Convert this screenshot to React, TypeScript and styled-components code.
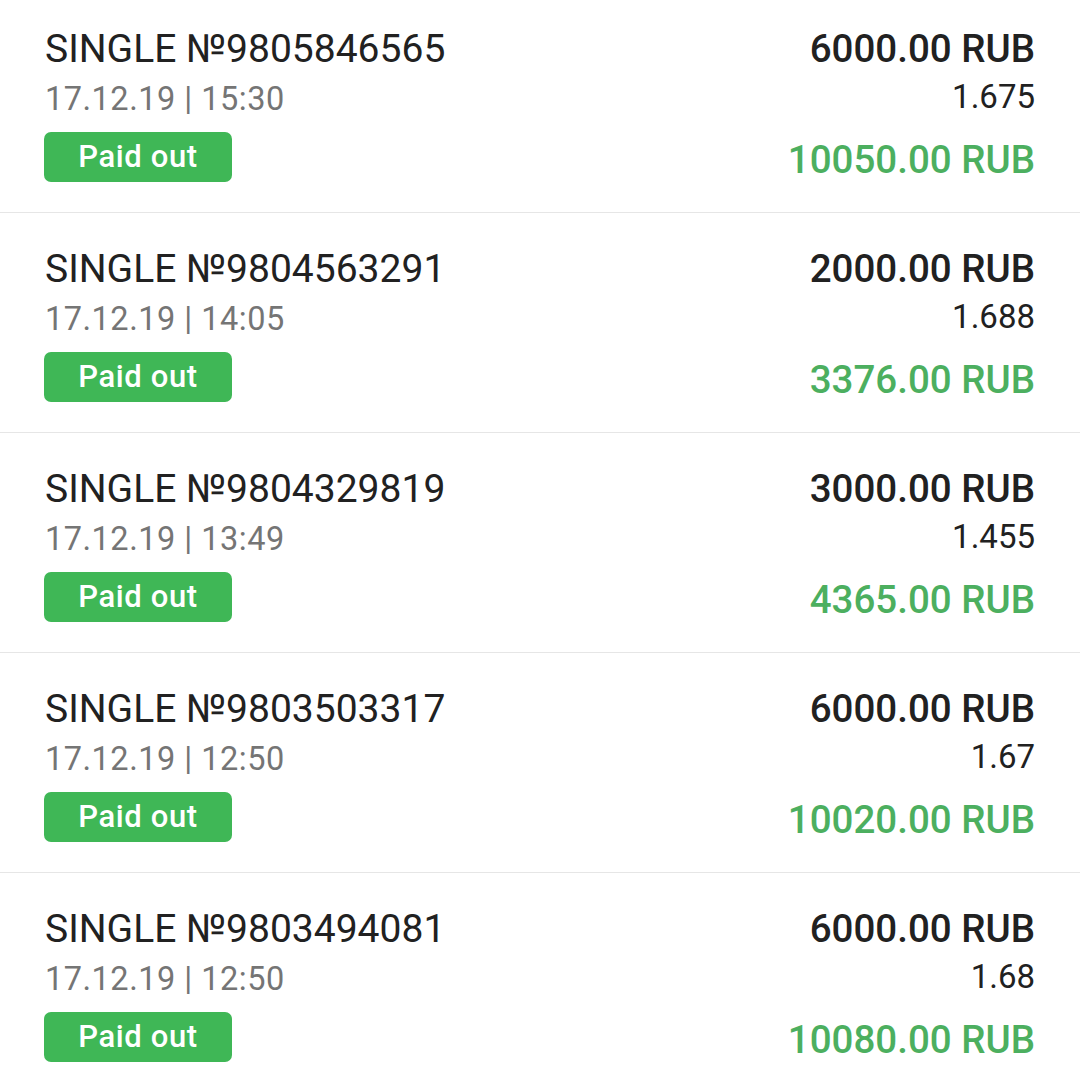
import React from "react";
import styled, { createGlobalStyle } from "styled-components";

const GlobalStyle = createGlobalStyle`
  html, body {
    margin: 0;
    padding: 0;
    background: #ffffff;
  }
  body {
    font-family: Roboto, "Noto Sans", "Liberation Sans", sans-serif;
    -webkit-font-smoothing: antialiased;
  }
`;

const List = styled.div`
  display: flex;
  flex-direction: column;
  width: 1080px;
  background: #ffffff;
`;

const Row = styled.div`
  display: grid;
  grid-template-columns: 1fr auto;
  grid-template-rows: 48px 47px 50px;
  row-gap: 6px;
  padding: 32px 45px 0 44px;
  border-bottom: 1px solid #e6e6e6;
  height: 220px;
  box-sizing: border-box;
  &:first-child {
    padding-top: 25px;
    height: 213px;
  }
  &:last-child {
    border-bottom: none;
  }
`;

const Title = styled.div`
  font-size: 39px;
  line-height: 48px;
  color: #212121;
  font-weight: 400;
  padding-left: 1px;
  white-space: nowrap;
`;

const DateText = styled.div`
  font-size: 32.5px;
  line-height: 40px;
  letter-spacing: 0.5px;
  color: #757575;
  padding-left: 1px;
  align-self: start;
`;

const Badge = styled.div`
  display: inline-flex;
  align-items: center;
  justify-content: center;
  justify-self: start;
  width: 188px;
  height: 50px;
  background: #3fb756;
  color: #ffffff;
  border-radius: 7px;
  font-size: 31px;
  font-weight: 500;
  letter-spacing: 0.6px;
  box-sizing: border-box;
  padding-bottom: 1px;
`;

const Amount = styled.div<{ $tone?: "dark" | "green" }>`
  text-align: right;
  font-size: 38.5px;
  line-height: 48px;
  font-weight: 500;
  white-space: nowrap;
  color: ${(p) => (p.$tone === "green" ? "#4caf5f" : "#212121")};
  align-self: start;
  margin-top: ${(p) => (p.$tone === "green" ? "4px" : "0")};
`;

const Coef = styled.div`
  text-align: right;
  font-size: 33px;
  line-height: 36px;
  color: #212121;
  align-self: start;
`;

type Bet = {
  id: string;
  date: string;
  stake: string;
  coef: string;
  payout: string;
};

const bets: Bet[] = [
  { id: "9805846565", date: "17.12.19 | 15:30", stake: "6000.00 RUB", coef: "1.675", payout: "10050.00 RUB" },
  { id: "9804563291", date: "17.12.19 | 14:05", stake: "2000.00 RUB", coef: "1.688", payout: "3376.00 RUB" },
  { id: "9804329819", date: "17.12.19 | 13:49", stake: "3000.00 RUB", coef: "1.455", payout: "4365.00 RUB" },
  { id: "9803503317", date: "17.12.19 | 12:50", stake: "6000.00 RUB", coef: "1.67", payout: "10020.00 RUB" },
  { id: "9803494081", date: "17.12.19 | 12:50", stake: "6000.00 RUB", coef: "1.68", payout: "10080.00 RUB" },
];

export default function App() {
  return (
    <>
      <GlobalStyle />
      <List>
        {bets.map((b) => (
          <Row key={b.id}>
            <Title>SINGLE №{b.id}</Title>
            <Amount $tone="dark">{b.stake}</Amount>
            <DateText>{b.date}</DateText>
            <Coef>{b.coef}</Coef>
            <Badge>Paid out</Badge>
            <Amount $tone="green">{b.payout}</Amount>
          </Row>
        ))}
      </List>
    </>
  );
}
